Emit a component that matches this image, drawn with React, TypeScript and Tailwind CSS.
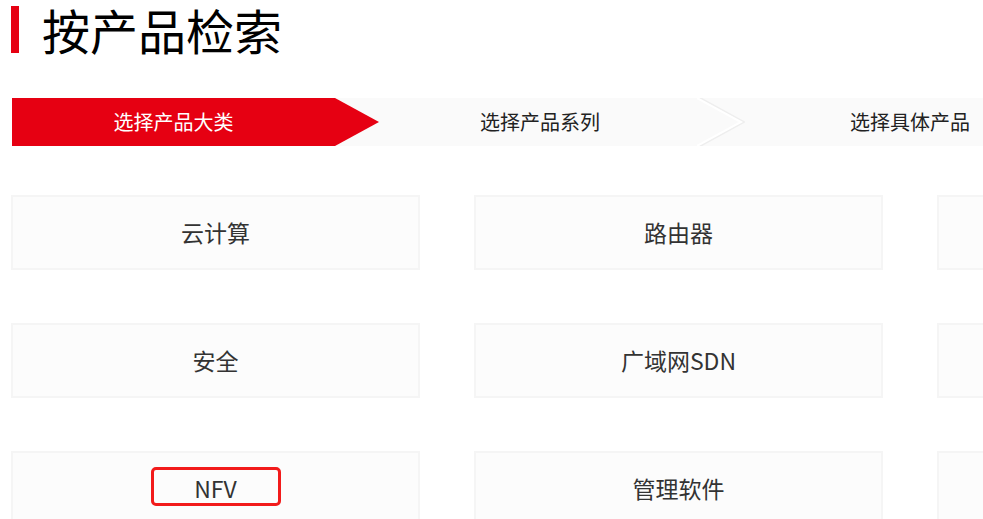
import React from 'react';

const rows = [
  ['云计算', '路由器', ''],
  ['安全', '广域网SDN', ''],
  ['NFV', '管理软件', ''],
];

function Card({ label, marked }: { label: string; marked?: boolean }) {
  return (
    <div className="relative h-[75px] bg-[#fcfcfc] border-2 border-[#f5f5f5] flex items-center justify-center text-[23px] text-[#333]">
      {label}
      {marked && (
        <div className="absolute left-[138px] top-[14px] w-[130px] h-[39px] border-[3px] border-[#f21b1b] rounded-[5px]" />
      )}
    </div>
  );
}

export default function App() {
  return (
    <div className="w-[983px] h-[519px] overflow-hidden bg-white font-['Noto_Sans_CJK_SC','Noto_Sans',sans-serif]">
      <div className="flex items-center h-[52px] mt-[3px] pl-[11px]">
        <div className="w-[8px] h-[47px] bg-[#e60012]" />
        <h1 className="ml-[23px] text-[48px] leading-[52px] text-black">按产品检索</h1>
      </div>

      <div className="mt-[43px] ml-[12px] flex h-[48px] w-[1100px] bg-[#fafafa] text-[20px]">
        <div className="relative z-10 w-[367px] shrink-0 bg-[#e60012] text-white flex items-center [clip-path:polygon(0_0,323px_0,100%_50%,323px_100%,0_100%)]">
          <span className="w-[323px] text-center">选择产品大类</span>
        </div>
        <div className="relative -ml-[44px] w-[410px] shrink-0 flex items-center justify-center text-[#222]">
          选择产品系列
          <svg className="absolute right-0 top-0" width="48" height="48" viewBox="0 0 48 48">
            <polyline points="2,0 46,24 2,48" fill="none" stroke="#eeeeee" strokeWidth="3" />
            <polyline points="0,0 44,24 0,48" fill="none" stroke="#ffffff" strokeWidth="2" />
          </svg>
        </div>
        <div className="w-[330px] shrink-0 flex items-center justify-center text-[#222]">选择具体产品</div>
      </div>

      <div className="mt-[49px] ml-[11px] grid grid-cols-[409px_409px_409px] gap-x-[54px] gap-y-[53px]">
        {rows.map((r, i) =>
          r.map((label, j) => <Card key={i + '-' + j} label={label} marked={label === 'NFV'} />)
        )}
      </div>
    </div>
  );
}
